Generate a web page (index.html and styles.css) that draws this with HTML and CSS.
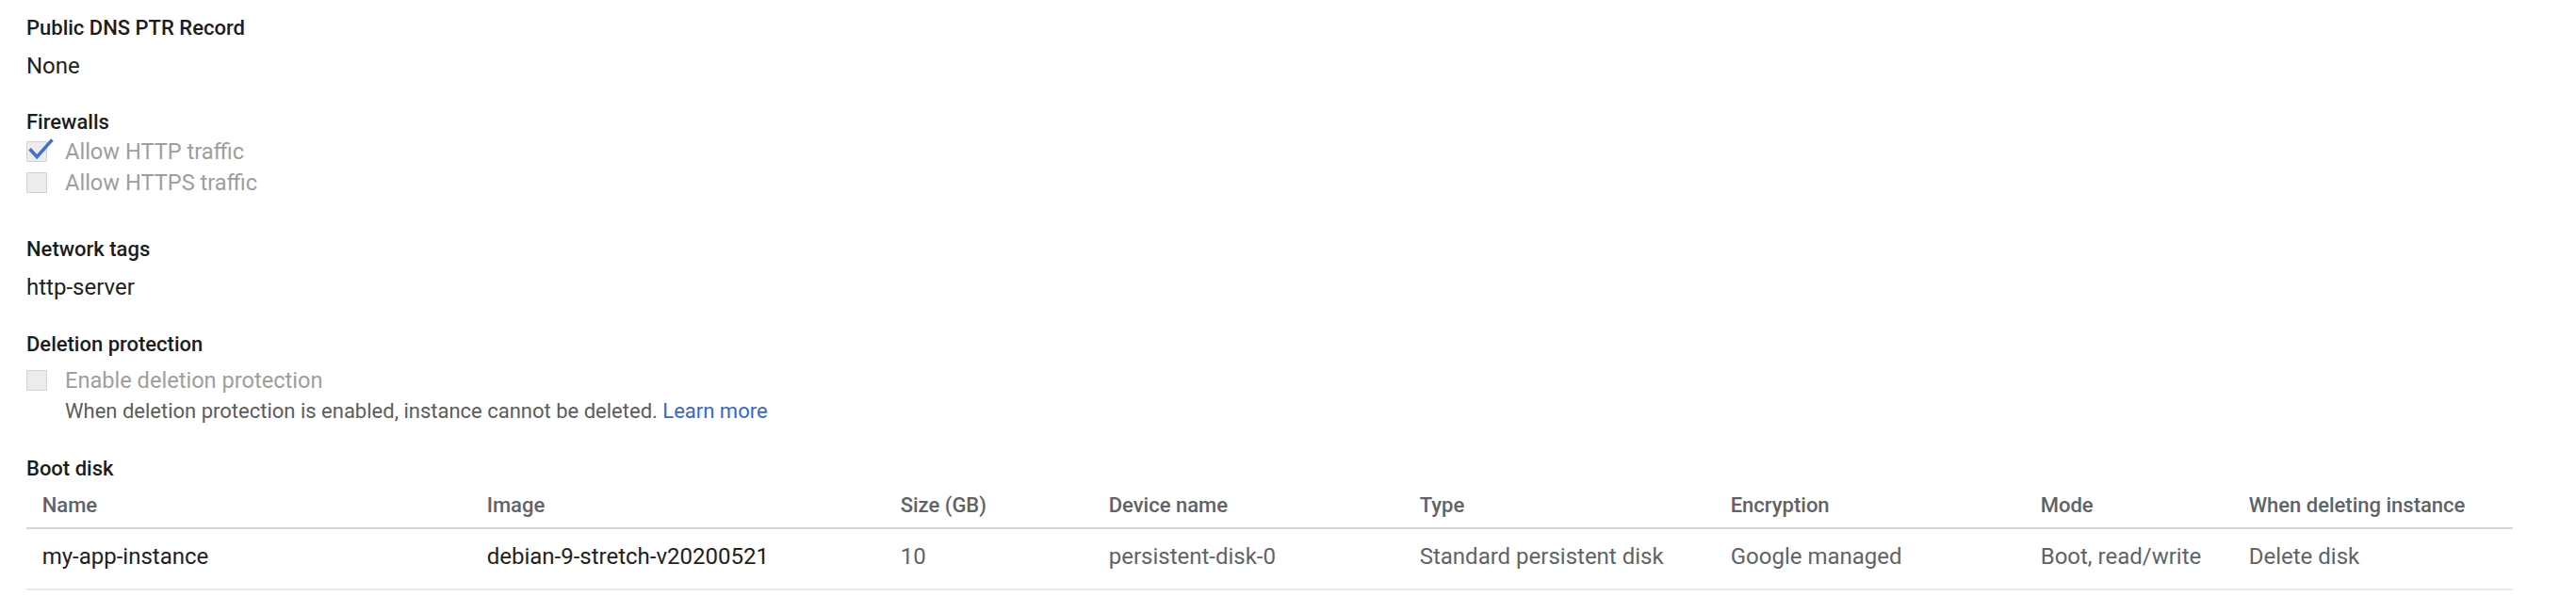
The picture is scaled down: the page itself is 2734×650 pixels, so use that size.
FILE: index.html
```html
<!DOCTYPE html>
<html lang="en">
<head>
<meta charset="utf-8">
<title>Instance details</title>
<link rel="stylesheet" href="styles.css">
</head>
<body>
<main class="details">
  <section class="field field-dns">
    <div class="field-label">Public DNS PTR Record</div>
    <div class="field-value">None</div>
  </section>

  <section class="field field-firewalls">
    <div class="field-label">Firewalls</div>
    <div class="checks">
      <label class="check">
        <span class="box checked">
          <svg class="tick" width="22" height="22" viewBox="0 0 22 22"><polyline points="3.6,8.2 11.2,16.6 27.4,-1.6" fill="none" stroke="#3f6fd2" stroke-width="3.6" stroke-linecap="butt" stroke-linejoin="miter"/></svg>
        </span>
        <span class="check-text">Allow HTTP traffic</span>
      </label>
      <label class="check">
        <span class="box"></span>
        <span class="check-text">Allow HTTPS traffic</span>
      </label>
    </div>
  </section>

  <section class="field field-tags">
    <div class="field-label">Network tags</div>
    <div class="field-value">http-server</div>
  </section>

  <section class="field field-deletion">
    <div class="field-label">Deletion protection</div>
    <label class="check">
      <span class="box"></span>
      <span class="check-text">Enable deletion protection</span>
    </label>
    <div class="helper">When deletion protection is enabled, instance cannot be deleted. <a class="link" href="#">Learn more</a></div>
  </section>

  <section class="field field-boot">
    <div class="field-label">Boot disk</div>
    <table class="disk-table">
      <colgroup>
        <col class="c-name"><col class="c-image"><col class="c-size"><col class="c-device">
        <col class="c-type"><col class="c-enc"><col class="c-mode"><col class="c-del">
      </colgroup>
      <thead>
        <tr>
          <th>Name</th><th>Image</th><th>Size (GB)</th><th>Device name</th>
          <th>Type</th><th>Encryption</th><th>Mode</th><th>When deleting instance</th>
        </tr>
      </thead>
      <tbody>
        <tr>
          <td class="strong">my-app-instance</td>
          <td class="strong">debian-9-stretch-v20200521</td>
          <td>10</td>
          <td>persistent-disk-0</td>
          <td>Standard persistent disk</td>
          <td>Google managed</td>
          <td>Boot, read/write</td>
          <td>Delete disk</td>
        </tr>
      </tbody>
    </table>
  </section>
</main>
</body>
</html>
```

FILE: styles.css
```css
* { box-sizing: border-box; }

html, body {
  margin: 0;
  padding: 0;
  background: #ffffff;
}

body {
  font-family: Roboto, "Liberation Sans", Arial, sans-serif;
  color: #212121;
}

.details {
  padding: 16px 0 0 28px;
  display: flex;
  flex-direction: column;
}

.field {
  display: flex;
  flex-direction: column;
}

.field-label {
  font-size: 22px;
  line-height: 28px;
  font-weight: 500;
  color: #1c1c1c;
}

.field-value {
  font-size: 24px;
  line-height: 32px;
  color: #212121;
}

.field-dns .field-value { margin-top: 10.2px; }

.field-firewalls { margin-top: 29.8px; }
.field-firewalls .checks {
  margin-top: 1.5px;
  display: flex;
  flex-direction: column;
}
.field-firewalls .check + .check { margin-top: 0.4px; }

.field-tags { margin-top: 41.5px; }
.field-tags .field-value { margin-top: 9.8px; }

.field-deletion { margin-top: 30.7px; }
.field-deletion .check { margin-top: 8px; }

.field-boot { margin-top: 33.6px; }

.check {
  display: flex;
  align-items: center;
  height: 32px;
  gap: 19px;
}

.box {
  position: relative;
  width: 22px;
  height: 22px;
  flex: none;
  background: #ececec;
  border: 1.5px solid #d2d2d2;
  border-radius: 1px;
}

.tick {
  position: absolute;
  left: -1.5px;
  top: -1.5px;
  overflow: visible;
}

.check-text {
  font-size: 23.6px;
  line-height: 32px;
  color: #9e9e9e;
}

.helper {
  margin-top: 3px;
  margin-left: 41px;
  font-size: 22px;
  line-height: 28px;
  color: #5c5c5c;
}

.link {
  color: #3367d6;
  text-decoration: none;
}

.disk-table {
  width: 2639px;
  border-collapse: collapse;
  table-layout: fixed;
}

.c-name { width: 472px; }
.c-image { width: 439px; }
.c-size { width: 221px; }
.c-device { width: 330px; }
.c-type { width: 330px; }
.c-enc { width: 329px; }
.c-mode { width: 221px; }
.c-del { width: 297px; }

.disk-table th {
  text-align: left;
  font-size: 22px;
  line-height: 28px;
  font-weight: 500;
  color: #5f6368;
  padding: 10.4px 16.7px 9px;
  border-bottom: 2px solid #d6d6d6;
  white-space: nowrap;
}

.disk-table td {
  font-size: 24px;
  line-height: 32px;
  color: #5f6368;
  padding: 13.5px 16.7px 17.7px;
  border-bottom: 2px solid #ebebeb;
  white-space: nowrap;
}

.disk-table td.strong { color: #212121; }
```
